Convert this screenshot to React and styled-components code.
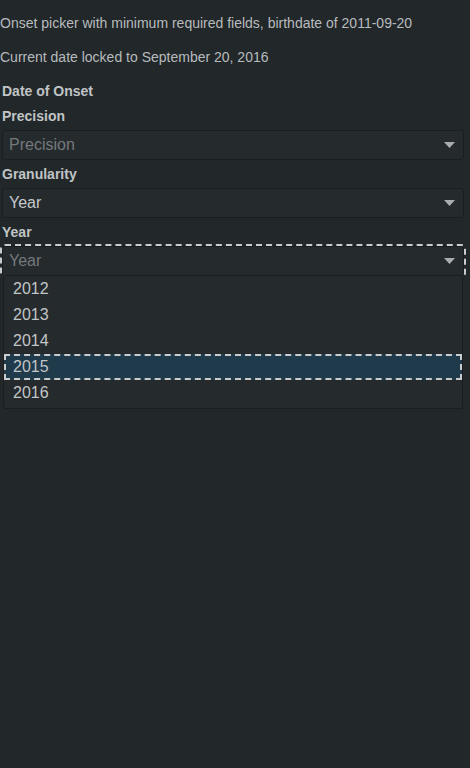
import React from "react";
import styled, { createGlobalStyle } from "styled-components";

const Global = createGlobalStyle`
  html, body { margin: 0; padding: 0; background: #222729; }
  body { font-family: "Liberation Sans", Arial, sans-serif; color: #b9bdc0; }
`;

const Page = styled.div`
  display: flex;
  flex-direction: column;
  min-height: 768px;
  padding-top: 13px;
  box-sizing: border-box;
`;

const Intro = styled.p`
  margin: 0 0 14px 0;
  font-size: 14px;
  line-height: 20px;
  color: #b7bbbe;
`;

const Legend = styled.div`
  font-size: 14px;
  line-height: 20px;
  font-weight: bold;
  color: #c0c4c6;
  padding-left: 2px;
  margin-bottom: ${(p) => p.$mb || 0}px;
`;

const Field = styled.div`
  display: flex;
  flex-direction: column;
  gap: 4px;
  margin-bottom: 4px;
`;

const Control = styled.div`
  position: relative;
  margin-left: 2px;
  width: 462px;
  height: 30px;
  box-sizing: border-box;
  background: #252a2d;
  border: 1px solid #1a1e20;
  border-radius: 3px;
  display: flex;
  align-items: center;
  padding: 0 7px 0 5px;
  font-size: 16px;
  outline: ${(p) => (p.$focused ? "2px dashed #c9cbcc" : "none")};
  color: ${(p) => (p.$placeholder ? "#74797c" : "#c6c9cb")};
`;

const Value = styled.span`
  flex: 1;
  padding-left: 1px;
`;

const Arrow = styled.svg`
  width: 11px;
  height: 6px;
  margin-right: 1px;
`;

const Menu = styled.div`
  position: absolute;
  top: 29px;
  left: 0px;
  width: 460px;
  box-sizing: border-box;
  background: #252a2d;
  border: 1px solid #1a1e20;
  border-top: none;
  border-radius: 0 0 3px 3px;
  padding-bottom: 2px;
  z-index: 10;
`;

const Option = styled.div`
  height: 26px;
  line-height: 26px;
  padding-left: 9px;
  font-size: 16px;
  color: #c2c5c7;
  box-sizing: border-box;
  background: ${(p) => (p.$active ? "#1f3a4a" : "transparent")};
  outline: ${(p) => (p.$active ? "2px dashed #c9cbcc" : "none")};
  outline-offset: -2px;
`;

const Caret = () => (
  <Arrow viewBox="0 0 11 6">
    <path d="M0 0 H11 L5.5 6 Z" fill="#a9adaf" />
  </Arrow>
);

const Select = ({ value, placeholder, focused, children }) => (
  <Control $placeholder={!value} $focused={focused}>
    <Value>{value || placeholder}</Value>
    <Caret />
    {children}
  </Control>
);

export default function App() {
  const years = ["2012", "2013", "2014", "2015", "2016"];
  return (
    <>
      <Global />
      <Page>
        <Intro>Onset picker with minimum required fields, birthdate of 2011-09-20</Intro>
        <Intro>Current date locked to September 20, 2016</Intro>
        <Legend $mb={5}>Date of Onset</Legend>
        <Field>
          <Legend>Precision</Legend>
          <Select placeholder="Precision" />
        </Field>
        <Field>
          <Legend>Granularity</Legend>
          <Select value="Year" />
        </Field>
        <Field>
          <Legend>Year</Legend>
          <Select placeholder="Year" focused>
            <Menu>
              {years.map((y) => (
                <Option key={y} $active={y === "2015"}>
                  {y}
                </Option>
              ))}
            </Menu>
          </Select>
        </Field>
      </Page>
    </>
  );
}
